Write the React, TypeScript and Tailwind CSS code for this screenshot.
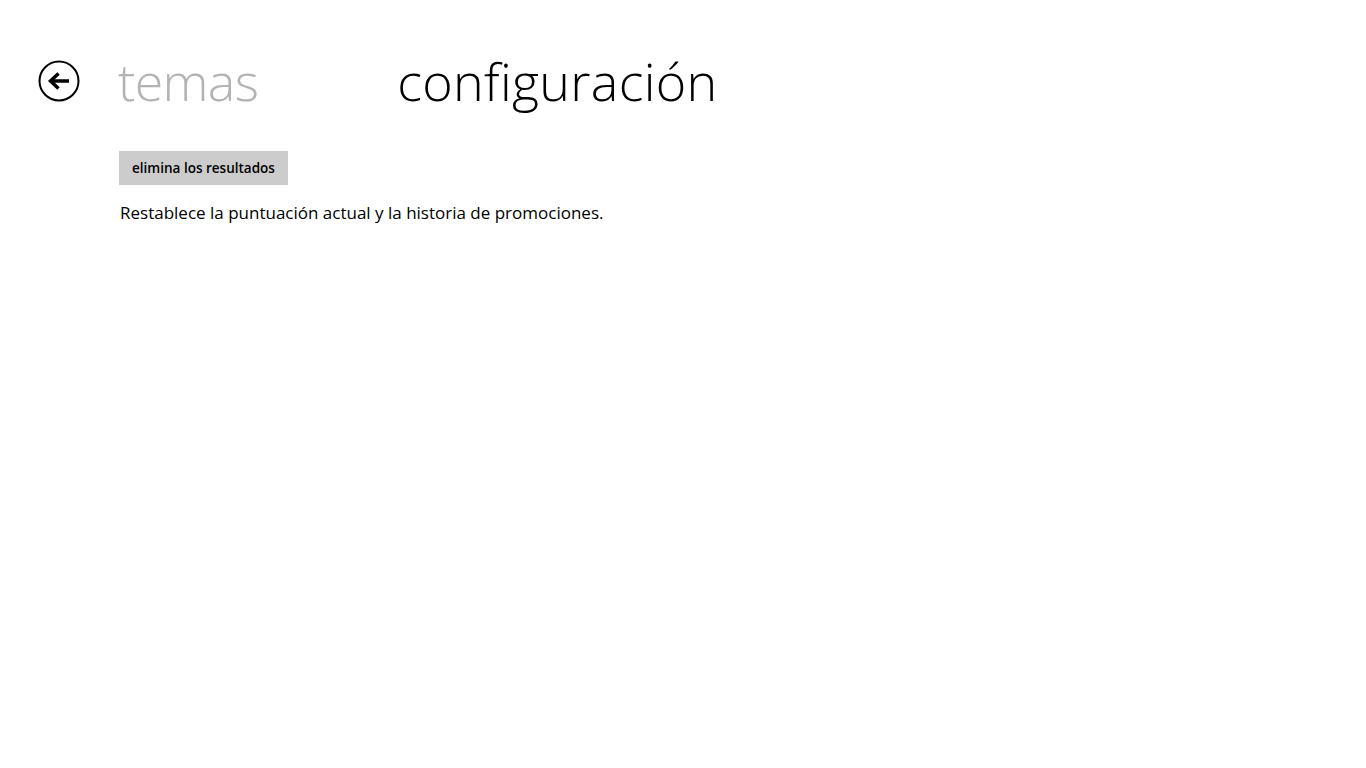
import React from 'react'

const BackIcon = () => (
  <svg width="42" height="42" viewBox="0 0 42 42" fill="none">
    <circle cx="21" cy="21" r="19.5" stroke="#000" strokeWidth="2" />
    <path d="M31 21H15" stroke="#000" strokeWidth="3.5" />
    <path d="M20.5 13.5L12.5 21l8 7.5" stroke="#000" strokeWidth="3.5" strokeLinejoin="miter" />
  </svg>
)

const App = () => {
  return (
    <div className="min-h-screen w-full bg-white text-black" style={{ fontFamily: '"Open Sans", "Noto Sans", sans-serif' }}>
      <div className="flex items-start pt-[44px]">
        <button className="ml-[38px] mt-[16px]">
          <BackIcon />
        </button>
        <h1 className="ml-[38px] text-[52px] font-light leading-[74px] tracking-[-0.7px] text-[#b3b3b3]">temas</h1>
        <h1 className="ml-[139px] text-[52px] font-light leading-[74px] tracking-[0.3px] text-black">configuración</h1>
      </div>
      <div className="ml-[119px] mt-[33px]">
        <button className="h-[34px] w-[169px] bg-[#cccccc] text-[13.5px] font-semibold text-black">
          elimina los resultados
        </button>
        <p className="mt-[16px] pl-[1px] text-[17px] leading-[24px]">
          Restablece la puntuación actual y la historia de promociones.
        </p>
      </div>
    </div>
  )
}

export default App
